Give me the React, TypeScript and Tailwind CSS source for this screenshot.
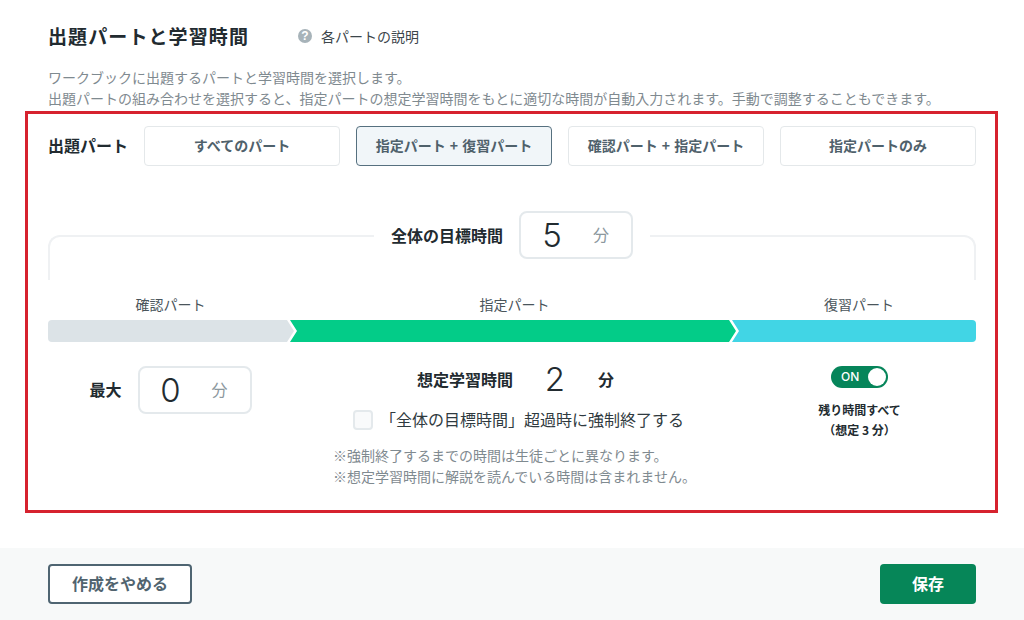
const partButtons = [
  { label: "すべてのパート", active: false },
  { label: "指定パート + 復習パート", active: true },
  { label: "確認パート + 指定パート", active: false },
  { label: "指定パートのみ", active: false },
];

function MinuteInput({ value }: { value: string }) {
  return (
    <div className="flex h-12 w-[114px] items-center rounded-lg border-2 border-[#e4e9ec] bg-white">
      <span className="w-[62px] text-center font-['Inter',sans-serif] text-[33px] leading-none font-light text-[#222b30]">{value}</span>
      <span className="ml-[10px] pb-[2px] text-base text-[#8c989e]">分</span>
    </div>
  );
}

export default function App() {
  return (
    <div className="flex h-[620px] w-[1024px] flex-col overflow-hidden bg-white font-['Noto_Sans_CJK_JP',sans-serif] text-[#222b30]">
      <div className="flex h-[73px] items-start px-12 pt-[21px]">
        <h1 className="text-[19px] leading-[30px] font-bold tracking-[1.1px]">出題パートと学習時間</h1>
        <div className="mt-[6px] ml-[49px] flex items-center gap-[9px] text-sm leading-[18px] text-[#3c464b]">
          <span className="flex h-[14px] w-[14px] items-center justify-center rounded-full bg-[#a7b3b9] font-['Liberation_Sans',sans-serif] text-xs font-bold text-white">?</span>
          各パートの説明
        </div>
      </div>

      <div className="px-12 text-sm leading-[21px] whitespace-nowrap text-[#7f8a90]">
        <p className="-mt-[6px]">ワークブックに出題するパートと学習時間を選択します。</p>
        <p>出題パートの組み合わせを選択すると、指定パートの想定学習時間をもとに適切な時間が自動入力されます。手動で調整することもできます。</p>
      </div>

      <section className="mt-[2px] ml-[25px] h-[402px] w-[973px] border-[3px] border-[#d6222e] pt-3 pr-[19px] pl-5">
        <div className="flex h-10 items-center">
          <span className="w-[96px] pb-[2px] text-base font-bold">出題パート</span>
          <div className="flex gap-4">
            {partButtons.map((b) => (
              <button
                key={b.label}
                className={
                  b.active
                    ? "h-10 w-[196px] rounded border border-[#56707f] bg-[#f1f6f9] pb-[2px] text-sm font-bold [word-spacing:1px] text-[#4f616b]"
                    : "h-10 w-[196px] rounded border border-[#e4e8ea] bg-white pb-[2px] text-sm font-bold [word-spacing:1px] text-[#4f616b]"
                }
              >
                {b.label}
              </button>
            ))}
          </div>
        </div>

        <div className="mt-[45px] flex h-[69px] items-start">
          <div className="mt-6 h-[45px] flex-1 rounded-tl-xl border-t-2 border-l-2 border-[#eff1f3]" />
          <div className="mx-[17px] flex items-center gap-4">
            <span className="text-base font-bold">全体の目標時間</span>
            <MinuteInput value="5" />
          </div>
          <div className="mt-6 h-[45px] flex-1 rounded-tr-xl border-t-2 border-r-2 border-[#eff1f3]" />
        </div>

        <div className="mt-[14px] flex h-5 items-center text-sm text-[#4a555b]">
          <span className="w-[242px] pl-[3px] text-center">確認パート</span>
          <span className="w-[446px] pl-[3px] text-center">指定パート</span>
          <span className="flex-1 pl-[6px] text-center">復習パート</span>
        </div>

        <div className="mt-[6px] flex h-[22px]">
          <div className="w-[246px] rounded-l bg-[#dce3e7] [clip-path:polygon(0_0,calc(100%-7px)_0,100%_50%,calc(100%-7px)_100%,0_100%)]" />
          <div className="-ml-1 w-[446px] bg-[#03cc88] [clip-path:polygon(0_0,calc(100%-7px)_0,100%_50%,calc(100%-7px)_100%,0_100%,7px_50%)]" />
          <div className="-ml-1 flex-1 rounded-r bg-[#41d5e5] [clip-path:polygon(0_0,100%_0,100%_100%,0_100%,7px_50%)]" />
        </div>

        <div className="mt-6 flex">
          <div className="flex w-[242px] items-start justify-center gap-4 pl-[3px]">
            <span className="mt-[13px] text-base leading-5 font-bold">最大</span>
            <MinuteInput value="0" />
          </div>

          <div className="w-[446px]">
            <div className="flex h-[26px] items-center pl-[127px]">
              <span className="w-[96px] text-base font-bold">想定学習時間</span>
              <span className="w-[84px] text-center font-['Inter',sans-serif] text-[33px] leading-none font-light">2</span>
              <span className="ml-[1px] text-base font-bold">分</span>
            </div>
            <div className="mt-[18px] flex h-5 items-center pl-[63px]">
              <span className="h-5 w-5 rounded border-2 border-[#e4e9ec] bg-[#f9fafb]" />
              <span className="ml-[7px] pb-[2px] text-base text-[#2f3a40]">「全体の目標時間」超過時に強制終了する</span>
            </div>
            <div className="mt-[15px] pl-[43px] text-sm leading-[21px] text-[#7f8a90]">
              <p>※強制終了するまでの時間は生徒ごとに異なります。</p>
              <p>※想定学習時間に解説を読んでいる時間は含まれません。</p>
            </div>
          </div>

          <div className="flex flex-1 flex-col items-center pl-[7px]">
            <div className="flex h-[22px] w-[57px] items-center justify-between rounded-full bg-[#06855a] pr-[2px] pl-[10px] font-['Inter',sans-serif] text-xs font-medium text-white">
              ON
              <span className="h-[18px] w-[18px] rounded-full bg-white" />
            </div>
            <p className="mt-[12px] text-xs leading-[20px] font-bold">残り時間すべて</p>
            <p className="text-xs leading-[20px] font-bold">（想定 3 分）</p>
          </div>
        </div>
      </section>

      <footer className="mt-[35px] flex flex-1 items-start justify-between bg-[#f7f9f9] px-12 pt-4">
        <button className="h-10 w-[144px] rounded border-2 border-[#4f6572] bg-white pb-[2px] text-base font-bold text-[#51646f]">作成をやめる</button>
        <button className="h-10 w-[96px] rounded bg-[#068658] pb-[2px] text-base font-bold text-white">保存</button>
      </footer>
    </div>
  );
}
